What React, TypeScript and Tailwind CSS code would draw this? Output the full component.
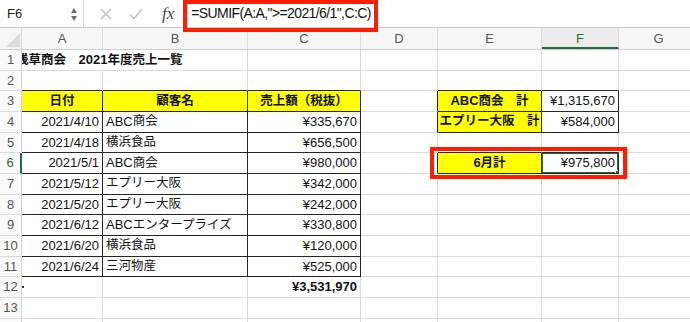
import React, { Fragment } from 'react';

type C = {
  t?: string;
  a?: 'l' | 'c' | 'r';
  b?: boolean;
  y?: boolean;
  dr?: boolean;
  db?: boolean;
  sel?: boolean;
  title?: boolean;
  tick?: boolean;
};

const COLS = [
  { name: 'A', w: 'w-[81px]' },
  { name: 'B', w: 'w-[145px]' },
  { name: 'C', w: 'w-[113px]' },
  { name: 'D', w: 'w-[77px]' },
  { name: 'E', w: 'w-[104px]' },
  { name: 'F', w: 'w-[77px]' },
  { name: 'G', w: 'w-[80px]' },
];

const CJK_ONE = /[\u3000-\u30ff\u4e00-\u9fff\uff00-\uffef]/;
const CJK_RUN = /([\u3000-\u30ff\u4e00-\u9fff\uff00-\uffef]+)/;

// japanese glyphs sit a bit smaller than the latin digits in the sheet
const T = ({ s }: { s: string }) => (
  <>
    {s.split(CJK_RUN).map((p, i) => (
      <Fragment key={i}>{CJK_ONE.test(p) ? <span className="text-[12.5px]">{p}</span> : p}</Fragment>
    ))}
  </>
);

const data = [
  ['2021/4/10', 'ABC商会', '¥335,670'],
  ['2021/4/18', '横浜食品', '¥656,500'],
  ['2021/5/1', 'ABC商会', '¥980,000'],
  ['2021/5/12', 'エプリー大阪', '¥342,000'],
  ['2021/5/20', 'エプリー大阪', '¥242,000'],
  ['2021/6/12', 'ABCエンタープライズ', '¥330,800'],
  ['2021/6/20', '横浜食品', '¥120,000'],
  ['2021/6/24', '三河物産', '¥525,000'],
];

const buildGrid = () => {
  const g: C[][] = Array.from({ length: 14 }, () => Array.from({ length: 7 }, () => ({} as C)));
  g[0][0] = { t: '浅草商会　2021年度売上一覧', b: true, title: true };
  // row 2: top edges of both tables
  [0, 1, 2, 4, 5].forEach((c) => (g[1][c] = { db: true }));
  g[2][0] = { t: '日付', a: 'c', b: true, y: true, dr: true, db: true };
  g[2][1] = { t: '顧客名', a: 'c', b: true, y: true, dr: true, db: true };
  g[2][2] = { t: '売上額（税抜）', a: 'c', b: true, y: true, dr: true, db: true };
  g[2][3] = { dr: true };
  g[2][4] = { t: 'ABC商会　計', a: 'c', b: true, y: true, dr: true, db: true };
  g[2][5] = { t: '¥1,315,670', a: 'r', dr: true, db: true };
  data.forEach((d, i) => {
    g[3 + i][0] = { t: d[0], a: 'r', dr: true, db: true };
    g[3 + i][1] = { t: d[1], dr: true, db: true };
    g[3 + i][2] = { t: d[2], a: 'r', dr: true, db: true };
  });
  g[3][3] = { dr: true };
  g[3][4] = { t: 'エプリー大阪　計', a: 'c', b: true, y: true, dr: true, db: true };
  g[3][5] = { t: '¥584,000', a: 'r', dr: true, db: true };
  g[4][4] = { db: true };
  g[4][5] = { db: true };
  g[5][3] = { dr: true };
  g[5][4] = { t: '6月計', a: 'c', b: true, y: true, dr: true, db: true };
  g[5][5] = { t: '¥975,800', a: 'r', dr: true, db: true, sel: true };
  g[11][0] = { tick: true };
  g[11][2] = { t: '¥3,531,970', a: 'r', b: true };
  return g;
};

const grid = buildGrid();

const Cell = ({ c, w }: { c: C; w: string }) => (
  <div
    className={`relative flex h-full shrink-0 items-center whitespace-nowrap border-b border-r px-[3px] ${w} ${
      c.title ? 'overflow-visible border-r-white' : c.dr ? 'overflow-hidden border-r-[#262626]' : 'overflow-hidden border-r-[#dadada]'
    } ${c.db ? 'border-b-[#262626]' : 'border-b-[#dadada]'} ${c.y ? 'bg-[#ffff00]' : 'bg-white'} ${
      c.a === 'r' ? 'justify-end' : c.a === 'c' ? 'justify-center' : 'justify-start'
    } ${c.b ? 'font-bold' : 'font-normal'}`}
  >
    {c.title ? (
      <span className="relative z-[5] ml-[-9px] text-[13px] text-[#111]">
        <T s={c.t || ''} />
      </span>
    ) : (
      c.t && <T s={c.t} />
    )}
    {c.tick && <span className="absolute left-0 top-[9px] h-[2px] w-[2px] bg-[#334]" />}
    {c.sel && (
      <span className="absolute inset-[-1px] border-2 border-[#1d6f42]">
        <span className="absolute bottom-[-3px] right-[-3px] h-[5px] w-[5px] border border-white bg-[#1d6f42]" />
      </span>
    )}
  </div>
);

const FormulaBar = () => (
  <div className="flex h-[28px] items-center border-b border-[#c9c9c9] bg-white">
    <div className="flex h-full w-[84px] shrink-0 items-center justify-between border-r border-[#d6d6d6] pl-[7px] pr-[5px]">
      <span className="text-[13px] text-[#222]">F6</span>
      <svg width="8" height="16" viewBox="0 0 8 16" className="mb-[1px]">
        <path d="M4 3 L7 8 L1 8 Z" fill="#6b6b6b" />
        <path d="M1 11 L7 11 L4 16 Z" fill="#6b6b6b" />
      </svg>
    </div>
    <svg width="12" height="12" viewBox="0 0 12 12" className="ml-[16px]">
      <path d="M1 1 L11 11 M11 1 L1 11" stroke="#c3c3c3" strokeWidth="1.6" fill="none" />
    </svg>
    <svg width="14" height="12" viewBox="0 0 14 12" className="ml-[17px]">
      <path d="M1 6.5 L5 10.5 L13 1" stroke="#c3c3c3" strokeWidth="1.6" fill="none" />
    </svg>
    <span className="ml-[19px] font-['Liberation_Serif',serif] text-[17px] italic leading-none text-[#4a4a4a]">fx</span>
    <span className="ml-[17px] text-[14px] tracking-[-0.6px] text-[#111]">=SUMIF(A:A,"&gt;=2021/6/1",C:C)</span>
  </div>
);

const ColumnHeader = () => (
  <div className="flex h-[22px] border-b border-[#cfcfcf] bg-[#f6f6f6]">
    <div className="relative h-full w-[22px] shrink-0 border-r border-[#d8d8d8]">
      <svg width="14" height="14" viewBox="0 0 14 14" className="absolute bottom-[2px] right-[1px]">
        <path d="M14 0 L14 14 L0 14 Z" fill="#dcdcdc" />
      </svg>
    </div>
    {COLS.map((col) => (
      <div
        key={col.name}
        className={`flex h-full shrink-0 items-center justify-center border-r border-[#dcdcdc] text-[13px] ${col.w} ${
          col.name === 'F' ? 'border-b-2 border-b-[#1d6f42] bg-[#ececec] pt-[2px] text-[#1d6f42]' : 'text-[#555]'
        }`}
      >
        {col.name}
      </div>
    ))}
  </div>
);

export default function App() {
  return (
    <div className="relative h-[322px] w-[690px] overflow-hidden bg-white font-['Liberation_Sans','Noto_Sans_CJK_JP',sans-serif] text-[13px] text-[#111]">
      <FormulaBar />
      <ColumnHeader />
      {grid.map((row, r) => (
        <div key={r} className="flex h-[20.67px]">
          <div
            className={`relative z-10 flex h-full w-[22px] shrink-0 items-center justify-center border-b border-b-[#dadada] bg-[#fafafa] text-[13px] ${
              r === 5 ? 'border-r-2 border-r-[#1d6f42] text-[#1d6f42]' : 'border-r border-r-[#d4d4d4] text-[#555]'
            }`}
          >
            {/* row 14 only peeks in at the bottom edge */}
            {r < 13 ? r + 1 : null}
          </div>
          {row.map((c, i) => (
            <Cell key={i} c={c} w={COLS[i].w} />
          ))}
        </div>
      ))}

      {/* annotation boxes */}
      <div className="pointer-events-none absolute left-[183px] top-0 h-[32px] w-[195px] border-4 border-[#ff1e00]" />
      <div className="pointer-events-none absolute left-[430px] top-[147px] h-[32px] w-[197px] border-4 border-[#ff1e00]" />
    </div>
  );
}
